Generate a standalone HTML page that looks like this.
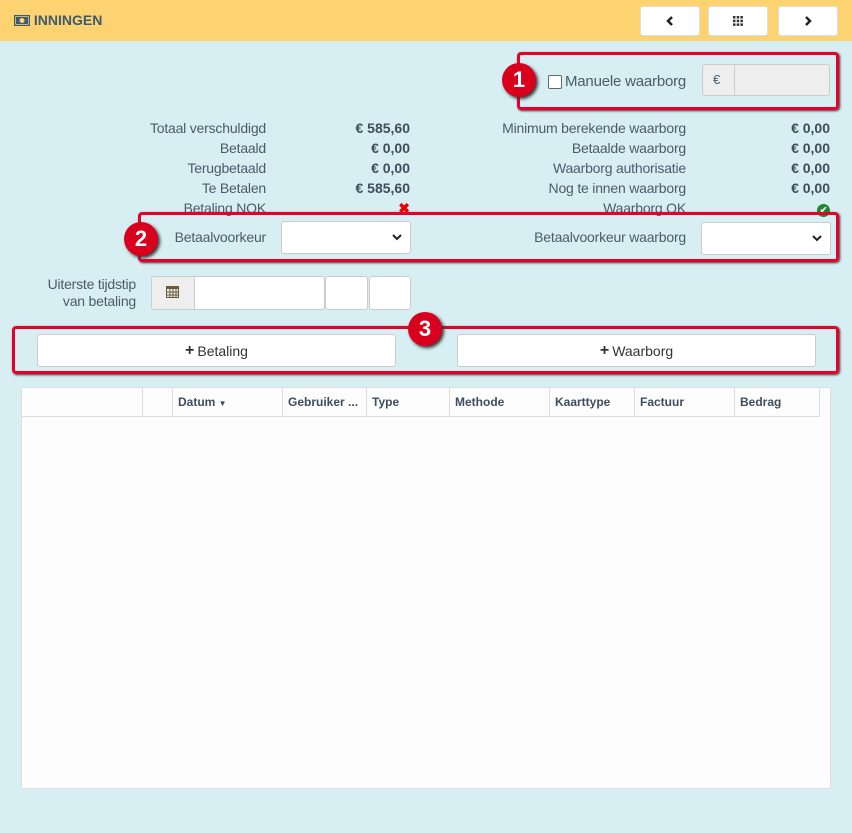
<!DOCTYPE html><html><head><style>
body{margin:0;width:852px;height:833px;background:#d7eef2;font-family:"Liberation Sans",sans-serif;color:#4b5b6b;position:relative;overflow:hidden}
.a{position:absolute}
.hdr{left:0;top:0;width:852px;height:41px;background:#fdd271}
.hb{background:#fff;border:1px solid #ddd;border-radius:3px;height:28px;top:6px;width:58px;display:flex;align-items:center;justify-content:center}
.lab{font-size:14px;text-align:right;white-space:nowrap;letter-spacing:-0.2px}
.val{font-size:14px;font-weight:bold;text-align:right;color:#3d4d5c}
.red{border:3px solid #e8002a;border-radius:4px;box-shadow:1px 1px 2px #333}
.badge{width:34px;height:34px;border-radius:50%;background:#d8001c;color:#fff;font-weight:bold;font-size:22px;display:flex;align-items:center;justify-content:center;box-shadow:2px 2px 3px #333}
.inp{background:#fff;border:1px solid #ccc;border-radius:3px;box-sizing:border-box}
.btn{background:#fff;border:1px solid #ccc;border-radius:3px;box-sizing:border-box;height:33px;display:flex;align-items:center;justify-content:center;font-size:14px;color:#333}
th{font-size:12px;font-weight:bold;text-align:left;padding:0 5px;border-right:1px solid #ddd;height:28px;color:#3d4d5c}
.chev{position:absolute;right:8px;top:11px}
</style></head><body>
<div class="a hdr"></div>
<div class="a" style="left:14px;top:12px;font-weight:bold;font-size:14px;color:#3e5a6e;display:flex;align-items:center">
<svg width="16" height="11" viewBox="0 0 16 11"><rect x="0.5" y="0.5" width="15" height="10" fill="none" stroke="#3e5a6e" stroke-width="1.5"/><rect x="2" y="2" width="12" height="7" fill="#3e5a6e"/><circle cx="8" cy="5.5" r="2.5" fill="#fdd271"/></svg>&nbsp;INNINGEN</div>
<div class="a hb" style="left:640px"><svg width="8" height="10"><path d="M6 1L2 5l4 4" fill="none" stroke="#222" stroke-width="2.5"/></svg></div>
<div class="a hb" style="left:708px"><svg width="10" height="10"><g fill="#333"><rect x="0" y="0" width="2.5" height="2.5"/><rect x="3.7" y="0" width="2.5" height="2.5"/><rect x="7.4" y="0" width="2.5" height="2.5"/><rect x="0" y="3.7" width="2.5" height="2.5"/><rect x="3.7" y="3.7" width="2.5" height="2.5"/><rect x="7.4" y="3.7" width="2.5" height="2.5"/><rect x="0" y="7.4" width="2.5" height="2.5"/><rect x="3.7" y="7.4" width="2.5" height="2.5"/><rect x="7.4" y="7.4" width="2.5" height="2.5"/></g></svg></div>
<div class="a hb" style="left:778px"><svg width="8" height="10"><path d="M2 1l4 4-4 4" fill="none" stroke="#222" stroke-width="2.5"/></svg></div>

<div class="a red" style="left:517px;top:52px;width:316px;height:52px"></div>
<div class="a badge" style="left:502px;top:63px">1</div>
<div class="a" style="left:548px;top:75px;width:12px;height:12px;border:1px solid #666;border-radius:2px;background:#fff"></div>
<div class="a lab" style="left:565px;top:73px;font-size:15px">Manuele waarborg</div>
<div class="a" style="left:702px;top:64px;width:128px;height:32px;background:#eee;border:1px solid #ccc;border-radius:3px;box-sizing:border-box"></div>
<div class="a" style="left:734px;top:64px;width:1px;height:32px;background:#ccc"></div>
<div class="a" style="left:713px;top:72px;font-size:13px">€</div>

<div class="a lab" style="right:586px;top:118px;line-height:20px">Totaal verschuldigd<br>Betaald<br>Terugbetaald<br>Te Betalen<br>Betaling NOK</div>
<div class="a val" style="right:442px;top:118px;line-height:20px">€ 585,60<br>€ 0,00<br>€ 0,00<br>€ 585,60<br><span style="color:#e00">✖</span></div>
<div class="a lab" style="right:166px;top:118px;line-height:20px">Minimum berekende waarborg<br>Betaalde waarborg<br>Waarborg authorisatie<br>Nog te innen waarborg<br>Waarborg OK</div>
<div class="a val" style="right:22px;top:118px;line-height:20px">€ 0,00<br>€ 0,00<br>€ 0,00<br>€ 0,00<br><span style="display:inline-block;width:13px;height:13px;border-radius:50%;background:#1a8a2a;color:#fff;font-size:9px;line-height:13px;text-align:center">✔</span></div>

<div class="a red" style="left:138px;top:212px;width:695px;height:44px"></div>
<div class="a badge" style="left:124px;top:222px">2</div>
<div class="a lab" style="right:586px;top:229px">Betaalvoorkeur</div>
<div class="a inp" style="left:281px;top:221px;width:130px;height:33px"><svg class="chev" width="10" height="8"><path d="M1 2l4 4 4-4" fill="none" stroke="#222" stroke-width="2"/></svg></div>
<div class="a lab" style="right:166px;top:229px">Betaalvoorkeur waarborg</div>
<div class="a inp" style="left:701px;top:222px;width:130px;height:33px"><svg class="chev" width="10" height="8"><path d="M1 2l4 4 4-4" fill="none" stroke="#222" stroke-width="2"/></svg></div>

<div class="a lab" style="right:716px;top:276px;line-height:17px">Uiterste tijdstip<br>van betaling</div>
<div class="a inp" style="left:151px;top:276px;width:174px;height:34px;background:#eee"></div>
<div class="a inp" style="left:194px;top:276px;width:131px;height:34px;border-radius:0 3px 3px 0"></div>
<svg class="a" style="left:166px;top:285px" width="13" height="13"><rect x="0.5" y="1.5" width="12" height="11" fill="none" stroke="#6b5a3a"/><rect x="0" y="1" width="13" height="3" fill="#6b5a3a"/><path d="M1 7h11M1 10h11M4 4v9M7 4v9M10 4v9" stroke="#6b5a3a"/></svg>
<div class="a inp" style="left:325px;top:276px;width:43px;height:34px"></div>
<div class="a inp" style="left:369px;top:276px;width:42px;height:34px"></div>

<div class="a red" style="left:12px;top:326px;width:821px;height:42px"></div>
<div class="a btn" style="left:37px;top:334px;width:359px"><b style="font-size:16px;margin-right:3px">+</b>Betaling</div>
<div class="a btn" style="left:457px;top:334px;width:359px"><b style="font-size:16px;margin-right:3px">+</b>Waarborg</div>
<div class="a badge" style="left:408px;top:312px">3</div>

<div class="a" style="left:21px;top:387px;width:810px;height:402px;background:#fdfdfd;border:1px solid #ddd;box-sizing:border-box">
<table style="border-collapse:collapse;width:798px;table-layout:fixed;border-bottom:1px solid #ddd"><tr>
<th style="width:110px"></th><th style="width:19px"></th><th style="width:99px">Datum <span style="font-size:8px">▼</span></th><th style="width:73px">Gebruiker ...</th><th style="width:72px">Type</th><th style="width:89px">Methode</th><th style="width:74px">Kaarttype</th><th style="width:89px">Factuur</th><th style="width:74px">Bedrag</th></tr></table></div>
</body></html>
